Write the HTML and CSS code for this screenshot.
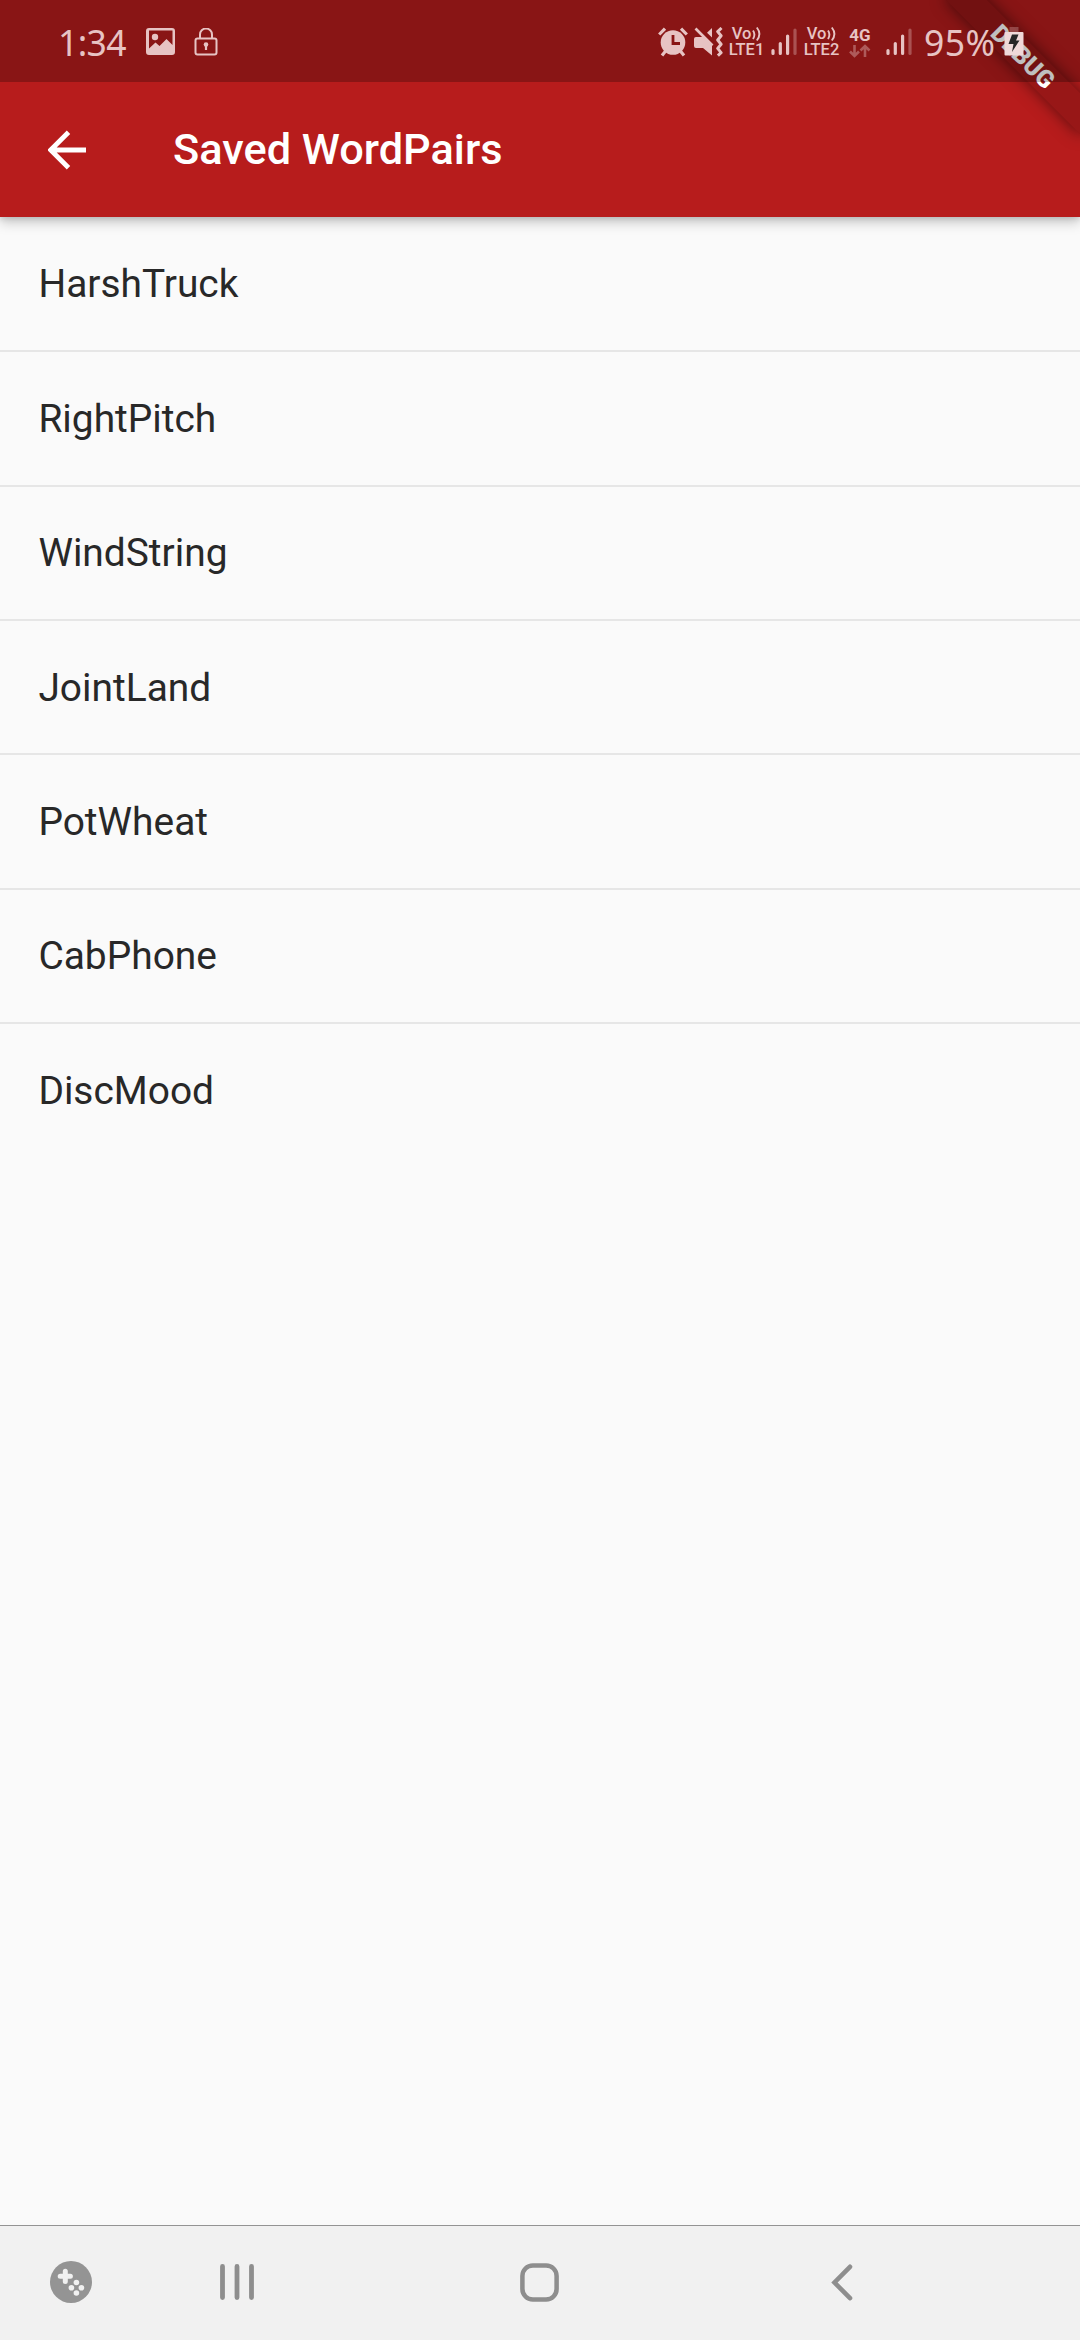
FILE: index.html
```html
<!DOCTYPE html>
<html lang="en">
<head>
<meta charset="utf-8">
<title>Saved WordPairs</title>
<link rel="stylesheet" href="styles.css">
</head>
<body>
<div class="screen">
  <header class="header">
    <div class="status">
      <span class="clock">1:34</span>
      <svg class="icon-image" width="30" height="28" viewBox="0 0 30 28"><path fill="currentColor" fill-rule="evenodd" d="M3 0h23a3 3 0 0 1 3 3v21a3 3 0 0 1-3 3H3a3 3 0 0 1-3-3V3a3 3 0 0 1 3-3zM3 2.500V20.500L9.500 14.500 13.500 18 20.500 11 26.500 17V2.500z"/><circle cx="9" cy="9" r="3.200" fill="currentColor"/></svg>
      <svg class="icon-lock" width="24" height="28" viewBox="0 0 24 28"><g fill="none" stroke="currentColor" stroke-width="2"><rect x="1.500" y="10.500" width="21" height="16" rx="2"/><path d="M6 10V6.500a6 6 0 0 1 12 0V10"/></g><circle cx="12" cy="16.500" r="2.300" fill="currentColor"/><path stroke="currentColor" stroke-width="2.200" d="M12 17v5"/></svg>
      <span class="spacer"></span>
      <svg class="icon-alarm" width="30" height="30" viewBox="0 0 30 30"><path fill="none" stroke="currentColor" stroke-width="3.200" d="M1.200 7.500L7 1.600M28.800 7.500L23 1.600M4 28.500l4-5M26 28.500l-4-5"/><circle cx="15" cy="15.500" r="12.300" fill="currentColor"/><path fill="none" stroke="#891515" stroke-width="2.800" d="M15 8v8.500h7"/></svg>
      <svg class="icon-mute" width="30" height="30" viewBox="0 0 30 30"><path fill="currentColor" d="M2 10h7L18 18.500V28.500L9 21H2a2 2 0 0 1-2-2v-7a2 2 0 0 1 2-2zM18 1v9.500l-5-4.800z"/><path fill="none" stroke="currentColor" stroke-width="2.600" d="M1.500 1.500l17 17"/><path fill="none" stroke="currentColor" stroke-width="3" stroke-linejoin="round" d="M27.500 1l-3.800 3.600 3.400 4.200-3.400 4.200 3.400 4.200-3.400 4.200 3.400 4.200-3.200 3"/></svg>
      <span class="volte"><span class="volte-top">Vo<svg width="9" height="16" viewBox="0 0 9 16"><path fill="none" stroke="currentColor" stroke-width="1.900" d="M1 4.500q2.800 4 0 8.500M4.800 1.500q5.200 6.500 0 13"/></svg></span><span>LTE1</span></span>
      <svg class="signal signal-one" width="26" height="28" viewBox="0 0 26 28"><g stroke="currentColor" stroke-width="3.200" stroke-linecap="round"><path d="M2 22.500v3M9.300 15.500v10M16.600 8v17.500"/><path opacity=".35" d="M24 2v23.500"/></g></svg>
      <span class="volte volte-two"><span class="volte-top">Vo<svg width="9" height="16" viewBox="0 0 9 16"><path fill="none" stroke="currentColor" stroke-width="1.900" d="M1 4.500q2.800 4 0 8.500M4.800 1.500q5.200 6.500 0 13"/></svg></span><span>LTE2</span></span>
      <span class="data"><span>4G</span>
        <svg width="22" height="14" viewBox="0 0 22 14"><path opacity=".4" fill="none" stroke="currentColor" stroke-width="2.600" d="M5.500 1v11M1 7.500l4.500 4.500 4.500-4.500M16 13V2M11.500 6.500L16 2l4.500 4.500"/></svg></span>
      <svg class="signal signal-two" width="26" height="28" viewBox="0 0 26 28"><g stroke="currentColor" stroke-width="3.200" stroke-linecap="round"><path d="M2 22.500v3M9.300 15.500v10M16.600 8v17.500"/><path opacity=".35" d="M24 2v23.500"/></g></svg>
      <span class="percent">95%</span>
      <svg class="battery" width="20" height="30" viewBox="0 0 20 30"><path fill="currentColor" opacity=".3" d="M5.500 0h9v5h-9z"/><rect x=".5" y="5" width="19" height="23.500" rx="1" fill="#efd9d9"/><path fill="#262626" d="M8 7.500h6.500l-2.500 6h3.500L8 25l1.500-8H4.500z"/></svg>
    </div>
    <div class="appbar">
      <svg class="back" width="39" height="40" viewBox="0 0 39 40"><path fill="none" stroke="#fff" stroke-width="4.800" d="M38 20H3.500M20.500 2.200L2.700 20l17.800 17.800"/></svg>
      <h1 class="title">Saved WordPairs</h1>
    </div>
    <div class="ribbon-clip"><div class="ribbon">DEBUG</div></div>
  </header>
  <ul class="list">
    <li class="row">HarshTruck</li>
    <li class="row">RightPitch</li>
    <li class="row">WindString</li>
    <li class="row">JointLand</li>
    <li class="row">PotWheat</li>
    <li class="row">CabPhone</li>
    <li class="row">DiscMood</li>
  </ul>
  <nav class="navbar">
    <svg class="nav-game" width="42" height="42" viewBox="0 0 42 42"><circle cx="21" cy="21" r="21" fill="#949494"/><path stroke="#f1f1f1" stroke-width="5" stroke-linecap="round" d="M15.300 10.200v10.200M10.200 15.300h10.200"/><g fill="#f1f1f1"><circle cx="26.400" cy="21.500" r="2.800"/><circle cx="21.400" cy="26.700" r="2.800"/><circle cx="31.400" cy="26.700" r="2.800"/><circle cx="26.400" cy="32" r="2.800"/></g></svg>
    <svg class="nav-recents" width="34" height="36" viewBox="0 0 34 36"><path stroke="#8e8e8e" stroke-width="4.800" stroke-linecap="round" d="M2.500 2.400v31.200M17 2.400v31.200M31.500 2.400v31.200"/></svg>
    <svg class="nav-home" width="39" height="39" viewBox="0 0 39 39"><rect x="2.400" y="2.400" width="34.200" height="34.200" rx="10.500" fill="none" stroke="#8e8e8e" stroke-width="4.500"/></svg>
    <svg class="nav-back" width="22" height="37" viewBox="0 0 22 37"><path fill="none" stroke="#8e8e8e" stroke-width="4.600" stroke-linecap="round" d="M19 2.800L3.500 18.500 19 34.200"/></svg>
  </nav>
</div>
</body>
</html>
```
FILE: styles.css
```css
* { box-sizing: border-box; }
body { margin: 0; background: #fafafa; font-family: Roboto, sans-serif; }
svg { display: block; flex: none; }
.screen { width: 1080px; height: 2340px; display: flex; flex-direction: column; overflow: hidden; }
.header { position: relative; flex: none; height: 216.8px; background: #b71c1c; box-shadow: 0 5px 12px rgba(0,0,0,.22), 0 2px 5px rgba(0,0,0,.1); }
.status { position: relative; z-index: 2; height: 82.4px; display: flex; align-items: flex-start; padding-left: 58px; padding-right: 56px; background: rgba(0,0,0,.25); color: #e7c3c3; white-space: nowrap; }
.clock { width: 88px; margin-top: 21px; font: 35.5px/42px "Noto Sans", sans-serif; letter-spacing: -.6px; }
.icon-image { margin-top: 28px; }
.icon-lock { margin: 28px 0 0 18px; }
.spacer { flex: 1; }
.icon-alarm { margin-top: 27px; }
.icon-mute { margin: 27px 0 0 6px; }
.volte { display: flex; flex-direction: column; align-items: center; width: 37px; margin: 26px 0 0 4px; font-size: 16.5px; font-weight: 500; line-height: 16px; }
.volte-top { display: flex; gap: 1px; }
.signal-one { margin: 28px 0 0 6px; }
.volte-two { margin-left: 6px; }
.data { display: flex; flex-direction: column; align-items: center; width: 24px; margin: 26px 0 0 8px; font-size: 17px; font-weight: 700; line-height: 18px; }
.signal-two { margin: 28px 0 0 14px; }
.percent { width: 71px; margin: 21px 0 0 12px; font: 35.5px/42px "Noto Sans", sans-serif; letter-spacing: .4px; }
.battery { margin: 27px 0 0 9px; }
.appbar { height: 134.4px; display: flex; align-items: center; padding-left: 48px; }
.title { margin: 0 0 0 86px; color: #fff; font-size: 43.3px; font-weight: 500; line-height: 52px; }
.ribbon-clip { position: absolute; z-index: 1; inset: 0; overflow: hidden; }
.ribbon { position: absolute; left: 927px; top: 42px; width: 192px; height: 29px; transform: rotate(45deg); background: #981717; box-shadow: 0 0 16px rgba(0,0,0,.5); color: #fff; font-size: 24.5px; font-weight: 900; line-height: 29px; text-align: center; }
.list { flex: 1; margin: 0; padding: 1px 0 0; list-style: none; }
.row { height: 134.4px; padding: 0 0 0 38.4px; display: flex; align-items: center; color: #282828; font-size: 38.9px; border-bottom: 2px solid #e6e6e6; }
.row:last-child { border-bottom-color: transparent; }
.navbar { flex: none; height: 115px; display: flex; align-items: center; padding: 0 0 2px 49.5px; background: #f1f1f1; border-top: 1px solid #949494; }
.nav-recents { margin-left: 128px; }
.nav-home { margin-left: 266px; }
.nav-back { margin-left: 272px; }
```
